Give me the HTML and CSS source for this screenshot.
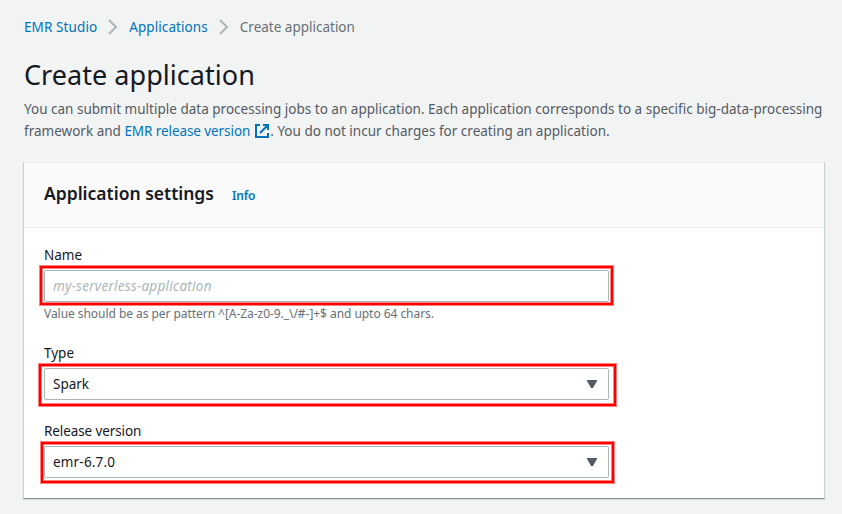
FILE: index.html
```
<!DOCTYPE html>
<html lang="en">
<head>
<meta charset="utf-8">
<title>Create application</title>
<link rel="stylesheet" href="styles.css">
</head>
<body>
<nav class="crumbs">
  <a class="crumb-studio" href="#">EMR Studio</a>
  <svg class="chev" width="10" height="16" viewBox="0 0 10 16"><path d="M1 1l7 7-7 7"/></svg>
  <a class="crumb-apps" href="#">Applications</a>
  <svg class="chev" width="10" height="16" viewBox="0 0 10 16"><path d="M1 1l7 7-7 7"/></svg>
  <span class="crumb-here">Create application</span>
</nav>
<h1><span>Create application</span></h1>
<p class="intro"><span class="line1">You can submit multiple data processing jobs to an application. Each application corresponds to a specific big-data-processing</span><br><span class="line2a">framework and </span><a class="line2b" href="#">EMR release version</a><svg class="ext" width="14" height="14" viewBox="0 0 14 14"><path d="M5 1H1v12h12V9M8 1h5v5M13 1L5 9"/></svg><span class="line2c">. You do not incur charges for creating an application.</span></p>
<main class="card">
  <header class="card-head"><h2>Application settings</h2><a class="info" href="#">Info</a></header>
  <div class="card-body">
    <div class="field">
      <label class="label-name">Name</label>
      <div class="control"><span class="placeholder">my-serverless-application</span><i class="mark mark-name"></i></div>
      <p class="hint"><span>Value should be as per pattern ^[A-Za-z0-9._\/#-]+$ and upto 64 chars.</span></p>
    </div>
    <div class="field">
      <label class="label-type">Type</label>
      <div class="control"><span class="val-type">Spark</span><svg class="caret" width="10" height="8" viewBox="0 0 10 8"><path d="M0 0h10v1L6 8H4L0 1z"/></svg><i class="mark mark-type"></i></div>
    </div>
    <div class="field">
      <label class="label-release">Release version</label>
      <div class="control"><span class="val-release">emr-6.7.0</span><svg class="caret" width="10" height="8" viewBox="0 0 10 8"><path d="M0 0h10v1L6 8H4L0 1z"/></svg><i class="mark mark-release"></i></div>
    </div>
  </div>
</main>
</body>
</html>
```
FILE: styles.css
```
* { box-sizing: border-box; }
body {
  margin: 0;
  padding: 16px 18px 0 24px;
  height: 514px;
  overflow: hidden;
  background: #f2f3f3;
  color: #16191f;
  font: 14px/22px "Noto Sans", sans-serif;
}
a { color: #0073bb; text-decoration: none; }
h1, h2, p { margin: 0; font-weight: 400; }
.crumbs { display: flex; align-items: center; height: 22px; font-size: 13.5px; color: #687078; white-space: nowrap; }
.crumb-studio { letter-spacing: .1px; }
.crumb-apps { letter-spacing: .08px; }
.chev { margin: 0 11px; fill: none; stroke: #aab7b8; stroke-width: 2; }
h1 { margin-top: 19px; height: 36px; font-size: 27px; line-height: 36px; letter-spacing: .04px; white-space: nowrap; }
.intro { margin-top: 5px; height: 44px; color: #545b64; white-space: nowrap; font-size: 13.5px; letter-spacing: .008px; }
.line2b { letter-spacing: -.08px; }
.ext { margin: 0 1px 0 5px; vertical-align: -2px; fill: none; stroke: #0073bb; stroke-width: 2; }
.card {
  width: 802px;
  height: 337px;
  margin: 20px 0 0 -1px;
  background: #fff;
  border: 1px solid #c8cfcf;
  border-top-color: #eaeded;
  border-bottom-color: #879596;
  box-shadow: 0 1px 1px #d5dbdb;
}
.card-head { display: flex; align-items: center; gap: 18px; height: 65px; padding: 0 20px 4px; background: #fafafa; border-bottom: 1px solid #eaeded; }
h2 { font-size: 17.5px; font-weight: 600; line-height: 22px; white-space: nowrap; }
.info { margin-top: 5px; font-size: 12px; font-weight: 600; letter-spacing: -.15px; }
.card-body { display: flex; flex-direction: column; gap: 20px; padding: 16px 20px 0; }
.field { width: 565px; font-size: 13.5px; }
label { display: block; height: 22px; margin-bottom: 4px; white-space: nowrap; }
.label-release { letter-spacing: -.1px; }
.control { position: relative; display: flex; align-items: center; justify-content: space-between; height: 32px; padding: 0 11px 0 8px; border: 1px solid #aab7b8; border-radius: 2px; background: #fff; white-space: nowrap; }
.placeholder { color: #aab7b8; font-style: italic; letter-spacing: .26px; }
.val-release { letter-spacing: .18px; }
.caret { fill: #545b64; }
.hint { height: 20px; padding-top: 1px; font-size: 12px; letter-spacing: -.05px; color: #687078; white-space: nowrap; }
.mark { position: absolute; border: 2px solid #f00; box-shadow: 0 0 0 1px #ff8080, inset 0 0 0 1px #ff8080; }
.mark-name { left: -5px; top: -5px; width: 573px; height: 39px; }
.mark-type { left: -6px; top: -5px; width: 577px; height: 42px; }
.mark-release { left: -4px; top: -5px; width: 573px; height: 41px; }
```
